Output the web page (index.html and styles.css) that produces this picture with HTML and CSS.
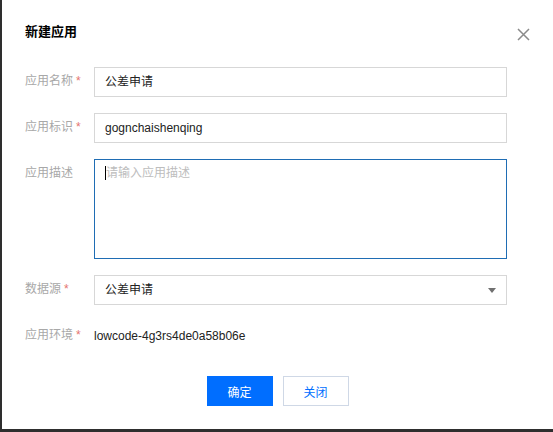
FILE: index.html
```html
<!DOCTYPE html>
<html lang="zh-CN">
<head>
<meta charset="utf-8">
<title>新建应用</title>
<link rel="stylesheet" href="styles.css">
</head>
<body>
<div class="dialog">
  <div class="header">
    <h3 class="title">新建应用</h3>
    <span class="close">
      <svg width="13" height="13" viewBox="0 0 13 13"><path d="M1 1L12 12M12 1L1 12" stroke="#8a8a8a" stroke-width="1.5" fill="none"/></svg>
    </span>
  </div>
  <div class="form">
    <div class="row">
      <label class="label">应用名称<span class="req">*</span></label>
      <div class="input">公差申请</div>
    </div>
    <div class="row">
      <label class="label">应用标识<span class="req">*</span></label>
      <div class="input">gognchaishenqing</div>
    </div>
    <div class="row">
      <label class="label">应用描述</label>
      <div class="textarea"><span class="caret"></span><span class="placeholder">请输入应用描述</span></div>
    </div>
    <div class="row">
      <label class="label">数据源<span class="req">*</span></label>
      <div class="input select">公差申请<span class="arrow"></span></div>
    </div>
    <div class="row">
      <label class="label">应用环境<span class="req">*</span></label>
      <div class="static">lowcode-4g3rs4de0a58b06e</div>
    </div>
  </div>
  <div class="footer">
    <button class="btn primary">确定</button>
    <button class="btn">关闭</button>
  </div>
</div>
</body>
</html>
```
FILE: styles.css
```css
html, body {
  margin: 0;
  padding: 0;
  background: #2e2e2e;
  width: 553px;
  height: 432px;
  overflow: hidden;
}
body {
  font-family: "Liberation Sans", "Noto Sans CJK SC", sans-serif;
  font-size: 12px;
  color: #333;
}
.dialog {
  margin-left: 2px;
  height: 429px;
  background: #fff;
  box-sizing: border-box;
}
.header {
  display: flex;
  justify-content: space-between;
  align-items: center;
  padding: 22px 23px 0 23px;
  height: 20px;
  box-sizing: content-box;
}
.title {
  margin: 0;
  font-size: 13px;
  font-weight: bold;
  line-height: 20px;
  color: #000;
}
.close {
  display: flex;
  margin-top: 4px;
}
.form {
  margin-top: 25px;
  padding: 0 46px 0 23px;
  display: flex;
  flex-direction: column;
  gap: 16px;
}
.row {
  display: flex;
  align-items: flex-start;
}
.label {
  width: 69px;
  flex: none;
  line-height: 28px;
  color: #a8a8a8;
}
.req {
  color: #e5736f;
  margin-left: 3px;
}
.input {
  flex: 1;
  height: 30px;
  box-sizing: border-box;
  border: 1px solid #d7d7d7;
  padding: 0 10px;
  line-height: 28px;
  color: #222;
  position: relative;
}
.textarea {
  flex: 1;
  height: 100px;
  box-sizing: border-box;
  border: 1px solid #1f6db4;
  padding: 5px 10px;
  line-height: 16px;
  display: flex;
  align-items: flex-start;
}
.caret {
  display: inline-block;
  width: 1px;
  height: 14px;
  margin-top: 1px;
  background: #000;
}
.placeholder {
  color: #bdbdbd;
}
.arrow {
  position: absolute;
  right: 10px;
  top: 12px;
  width: 0;
  height: 0;
  border-left: 4px solid transparent;
  border-right: 4px solid transparent;
  border-top: 5px solid #707070;
}
.static {
  line-height: 30px;
  color: #222;
}
.footer {
  margin-top: 25px;
  display: flex;
  justify-content: center;
  gap: 10px;
}
.btn {
  width: 66px;
  height: 30px;
  box-sizing: border-box;
  border: 1px solid #cfd8e6;
  background: #fff;
  color: #006eff;
  font-family: "Liberation Sans", "Noto Sans CJK SC", sans-serif;
  font-size: 12px;
  padding: 0;
  cursor: pointer;
}
.btn.primary {
  background: #006eff;
  border-color: #006eff;
  color: #fff;
}
```
